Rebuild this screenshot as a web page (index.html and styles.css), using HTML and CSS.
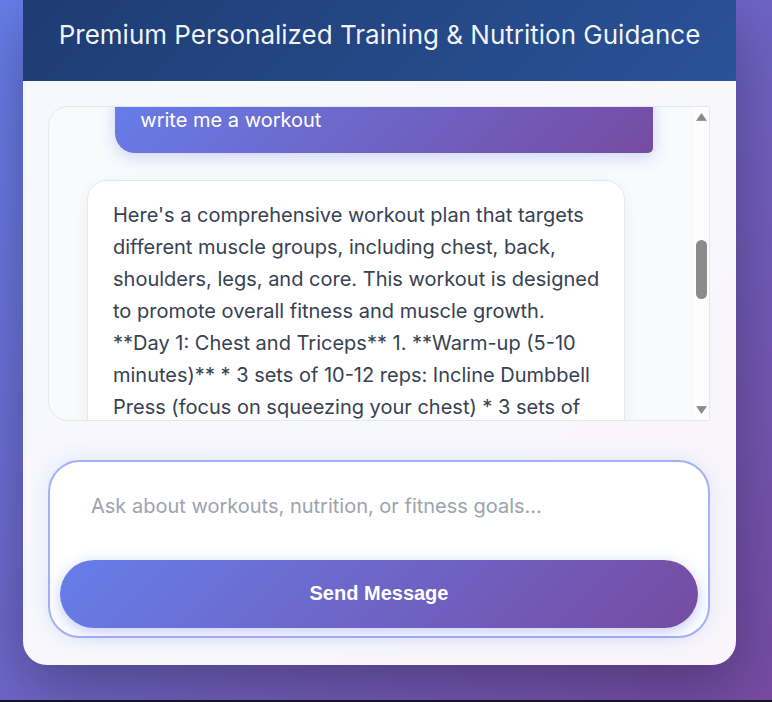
FILE: index.html
```html
<!DOCTYPE html>
<html lang="en">
<head>
<meta charset="utf-8">
<title>Premium Fitness Coach</title>
<link rel="stylesheet" href="styles.css">
</head>
<body>
<div class="card">
  <header class="header">
    <h1 class="title">Premium Personalized Training &amp; Nutrition Guidance</h1>
  </header>
  <main class="panel">
    <div class="chat">
      <div class="scroll" id="chat">
        <div class="msg bot">Welcome to your premium fitness coach! I can build personalized training programs, design nutrition plans that fit your goals, and answer any questions about exercise technique, recovery and healthy habits. Tell me about your experience level and what you would like to achieve.</div>
        <div class="msg user">hi</div>
        <div class="msg bot">Hello! How can I help you today? Would you like a workout plan, a meal plan, or advice on reaching a specific fitness goal?</div>
        <div class="msg user" id="target">write me a workout</div>
        <div class="msg bot">Here's a comprehensive workout plan that targets different muscle groups, including chest, back, shoulders, legs, and core. This workout is designed to promote overall fitness and muscle growth. **Day 1: Chest and Triceps** 1. **Warm-up (5-10 minutes)** * 3 sets of 10-12 reps: Incline Dumbbell Press (focus on squeezing your chest) * 3 sets of 8-10 reps: Barbell Bench Press * 3 sets of 12-15 reps: Cable Flyes 2. **Triceps** * 3 sets of 10-12 reps: Tricep Pushdowns * 3 sets of 12-15 reps: Overhead Dumbbell Extension **Day 2: Back and Biceps** 1. **Warm-up (5-10 minutes)** * 3 sets of 8-10 reps: Pull-ups (or Assisted Pull-ups) * 3 sets of 10-12 reps: Bent-over Barbell Rows * 3 sets of 12-15 reps: Seated Cable Rows 2. **Biceps** * 3 sets of 10-12 reps: Dumbbell Curls * 3 sets of 12-15 reps: Hammer Curls **Day 3: Rest** **Day 4: Legs and Core** * 3 sets of 8-10 reps: Barbell Squats * 3 sets of 10-12 reps: Romanian Deadlifts * 3 sets of 12-15 reps: Walking Lunges * 3 sets of 30-60 seconds: Plank</div>
      </div>
      <div class="bar" aria-hidden="true">
        <svg class="arrow" width="11" height="8" viewBox="0 0 11 8"><path d="M5.5 0.6 L10.4 7.6 H0.6 Z" fill="#8b8b8b" stroke="#8b8b8b" stroke-width="0.8" stroke-linejoin="round"/></svg>
        <div class="track">
          <div class="thumb" style="margin-top:119px"></div>
        </div>
        <svg class="arrow" width="11" height="8" viewBox="0 0 11 8"><path d="M0.6 0.4 H10.4 L5.5 7.4 Z" fill="#8b8b8b" stroke="#8b8b8b" stroke-width="0.8" stroke-linejoin="round"/></svg>
      </div>
    </div>
    <form class="composer">
      <textarea class="input" placeholder="Ask about workouts, nutrition, or fitness goals..."></textarea>
      <button class="send" type="button">Send Message</button>
    </form>
  </main>
</div>
<script src="script.js"></script>
</body>
</html>
```

FILE: styles.css
```css
html {
  background: #15151e;
}
body {
  margin: 0;
  height: 700px;
  background: linear-gradient(135deg, #667eea 0%, #764ba2 100%);
  font-family: Inter, "Noto Sans", sans-serif;
}
.card {
  margin-left: 23px;
  width: 713px;
  background: rgba(255, 255, 255, 0.95);
  border-radius: 0 0 24px 24px;
  box-shadow: 0 20px 60px rgba(0, 0, 0, 0.3);
  overflow: hidden;
}
.header {
  height: 81px;
  box-sizing: border-box;
  padding-top: 20px;
  background: linear-gradient(135deg, #1e3c72 0%, #2a5298 100%);
  text-align: center;
}
.title {
  margin: 0;
  font: 400 26px/30px Inter, sans-serif;
  color: rgba(255, 255, 255, 0.95);
}
.panel {
  padding: 25px 26px 27px 25px;
}
.chat {
  display: flex;
  height: 315px;
  box-sizing: border-box;
  border: 1px solid #e2e8f0;
  border-radius: 20px 0 0 20px;
  background: #f8fafc;
  overflow: hidden;
}
.scroll {
  flex: 1;
  min-width: 0;
  overflow: hidden;
  padding: 24px 41px 24px 38px;
}
.bar {
  width: 15px;
  flex: none;
  display: flex;
  flex-direction: column;
  align-items: center;
  background: #fdfdfd;
  padding: 6px 0;
}
.arrow {
  display: block;
  flex: none;
}
.track {
  flex: 1;
}
.thumb {
  width: 11px;
  height: 59px;
  border-radius: 6px;
  background: #8b8b8b;
}
.msg {
  width: 95%;
  box-sizing: border-box;
  margin-bottom: 27px;
  font-size: 20px;
  line-height: 32px;
}
.msg:last-child {
  margin-bottom: 0;
}
.bot {
  background: #fff;
  border: 1px solid #e2e8f0;
  border-radius: 20px;
  padding: 18px 23px 18px 25px;
  color: #374151;
  box-shadow: 0 4px 15px rgba(0, 0, 0, 0.05);
}
.user {
  margin-left: auto;
  padding: 17px 26px 17px 25px;
  border-radius: 20px 20px 5px 20px;
  background: linear-gradient(135deg, #667eea 0%, #764ba2 100%);
  color: #fff;
  box-shadow: 0 4px 15px rgba(102, 126, 234, 0.3);
}
.composer {
  margin: 39px 0 0;
  border: 2px solid #a3b1f5;
  border-radius: 32px;
  background: #fff;
  padding: 10px 10px 8px;
  box-shadow: 0 0 20px rgba(102, 126, 234, 0.15);
}
.input {
  display: block;
  width: 100%;
  height: 78px;
  box-sizing: border-box;
  border: 0;
  outline: 0;
  resize: none;
  padding: 22px 31px;
  background: transparent;
  font: 400 20px/24px Inter, sans-serif;
  color: #374151;
}
.input::placeholder {
  color: #9ca3af;
}
.send {
  display: block;
  width: 100%;
  height: 68px;
  margin-top: 10px;
  padding: 0 0 2px;
  border: 0;
  border-radius: 34px;
  background: linear-gradient(135deg, #667eea 0%, #764ba2 100%);
  color: #fff;
  font: 700 20px "Liberation Sans", Arial, sans-serif;
  box-shadow: 0 4px 15px rgba(102, 126, 234, 0.4);
}
```

FILE: script.js
```js
var chat = document.getElementById('chat');
var target = document.getElementById('target');
var cr = chat.getBoundingClientRect();
var tr = target.getBoundingClientRect();
chat.scrollTop = tr.bottom - cr.top - 46;
```
